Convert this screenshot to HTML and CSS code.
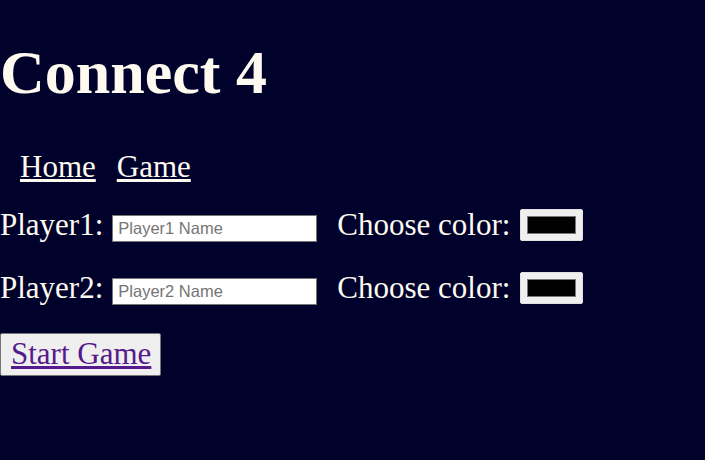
FILE: index.html
```html
<!DOCTYPE html>
<html>
<head>
<meta charset="utf-8">
<link rel="stylesheet" href="styles.css">
</head>
<body>
<h1 class="title">Connect 4</h1>
<nav class="nav">
  <a href="#" class="nav-link">Home</a>
  <a href="#" class="nav-link">Game</a>
</nav>
<form class="setup">
  <div class="player-row">
    <label class="label">Player1:</label>
    <input class="name-input" type="text" placeholder="Player1 Name">
    <label class="label color-label">Choose color:</label>
    <input class="color-input" type="color" value="#000000">
  </div>
  <div class="player-row last-row">
    <label class="label">Player2:</label>
    <input class="name-input" type="text" placeholder="Player2 Name">
    <label class="label color-label">Choose color:</label>
    <input class="color-input" type="color" value="#000000">
  </div>
  <button type="button" class="start-btn"><a class="start-link" href="#">Start Game</a></button>
</form>
</body>
</html>
```
FILE: styles.css
```css
html, body {
  margin: 0;
  padding: 0;
  background: #00022c;
  color: #fffaf0;
  font-family: "Liberation Serif", "Times New Roman", serif;
  font-size: 31px;
}
.title {
  margin: 0;
  padding-top: 36px;
  font-size: 62px;
  line-height: 72px;
  font-weight: bold;
}
.nav {
  display: flex;
  gap: 21px;
  padding-left: 20px;
  margin-top: 41px;
  line-height: 36px;
}
.nav-link {
  color: #fffaf0;
}
.setup {
  margin-top: 24px;
}
.player-row {
  display: flex;
  align-items: center;
  height: 32px;
  margin-bottom: 31px;
}
.last-row {
  margin-bottom: 29px;
}
.label {
  line-height: 32px;
  white-space: nowrap;
}
.name-input {
  margin-left: 9px;
  width: 205px;
  height: 27px;
  box-sizing: border-box;
  border: 1px solid #767676;
  background: #fff;
  font-family: "Liberation Sans", Arial, sans-serif;
  font-size: 16.5px;
  padding: 2px 5px;
  margin-top: 6px;
}
.name-input::placeholder {
  color: #757575;
}
.color-label {
  margin-left: 20px;
}
.color-input {
  margin-left: 10px;
  width: 63px;
  height: 32px;
  box-sizing: border-box;
  border: 1px solid #e0e0e0;
  border-radius: 2px;
  background: #efefef;
  padding: 0;
}
.color-input::-webkit-color-swatch-wrapper {
  padding: 6px 6px;
}
.color-input::-webkit-color-swatch {
  border: 1px solid #777;
  border-radius: 0;
}
.start-btn {
  margin: 0;
  padding: 2px 9px 4px 10px;
  height: 43px;
  white-space: nowrap;
  background: #efefef;
  border: 1px solid #767676;
  border-radius: 2px;
  font-family: "Liberation Serif", "Times New Roman", serif;
  font-size: 31px;
  line-height: 36px;
}
.start-link {
  color: #551a8b;
}
```
